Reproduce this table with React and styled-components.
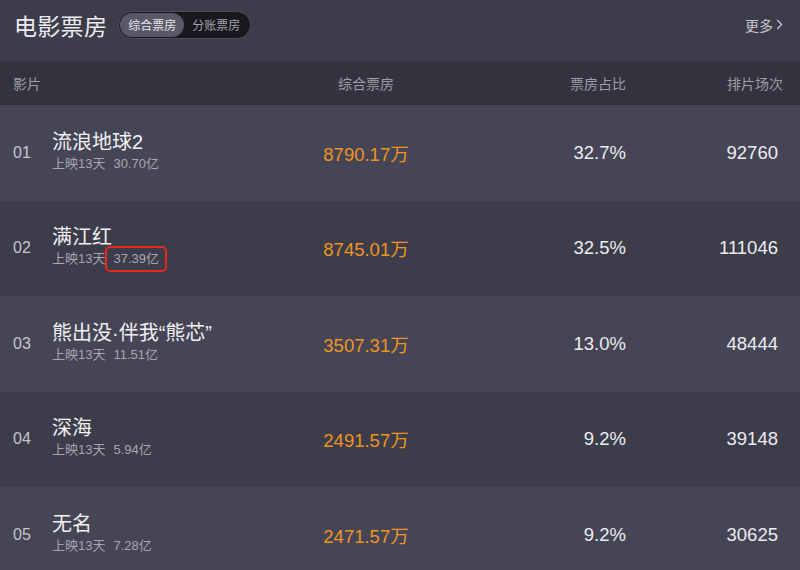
import React from 'react'
import styled, { createGlobalStyle } from 'styled-components'

const Global = createGlobalStyle`
  html, body {
    margin: 0;
    padding: 0;
    background: #464555;
  }
  body {
    font-family: "Liberation Sans", "Noto Sans CJK SC", sans-serif;
  }
`

const Page = styled.div`
  width: 800px;
  height: 570px;
  overflow: hidden;
  background: #3d3c4a;
`

const TopBar = styled.div`
  height: 61px;
  display: flex;
  align-items: center;
  padding: 0 17px 0 14px;
  gap: 11px;
`

const Title = styled.h1`
  margin: 0;
  font-size: 23px;
  font-weight: 400;
  color: #ececf0;
  letter-spacing: 0.3px;
  margin-top: -12px;
`

const Toggle = styled.div`
  display: flex;
  align-items: center;
  height: 28px;
  box-sizing: border-box;
  padding: 1px;
  border-radius: 14px;
  background: #18171d;
  border: 1px solid #4d4c5a;
  margin-top: -12px;
`

const ToggleItem = styled.span`
  height: 24px;
  display: flex;
  align-items: center;
  padding: 0 ${p => (p.$active ? '8px' : '9px')} 0 8px;
  border-radius: 12px;
  font-size: 12px;
  background: ${p => (p.$active ? '#5a5868' : 'transparent')};
  color: ${p => (p.$active ? '#e6e6ea' : '#a3a2aa')};
`

const More = styled.a`
  margin-left: auto;
  margin-top: -12px;
  display: flex;
  align-items: center;
  gap: 3px;
  font-size: 14px;
  color: #c6c5cc;
`

const Row = styled.div`
  display: grid;
  grid-template-columns: 39px 230px 168px 176px 1fr;
  align-items: center;
  padding: 0 ${p => (p.$head ? '17px' : '22px')} 0 13px;
  height: ${p => (p.$head ? '44px' : '95.5px')};
  background: ${p => p.$bg};
`

const HeadCell = styled.div`
  font-size: 14px;
  color: #9d9ca8;
  text-align: ${p => p.$align || 'left'};
  grid-column: ${p => p.$span || 'auto'};
`

const Rank = styled.div`
  font-size: 16px;
  color: #c5c5cc;
`

const Film = styled.div`
  display: flex;
  flex-direction: column;
  gap: 2px;
  margin-top: -4px;
`

const FilmName = styled.div`
  font-size: 20px;
  color: #f0f0f3;
  line-height: 24px;
`

const Meta = styled.div`
  font-size: 13px;
  color: #a7a6b0;
  line-height: 16px;
  display: flex;
  gap: 8px;
`

const Gross = styled.span`
  position: relative;
  &::after {
    content: '';
    display: ${p => (p.$marked ? 'block' : 'none')};
    position: absolute;
    inset: -5px -8px -5px -8px;
    border: 2.5px solid #e8291c;
    border-radius: 5px;
  }
`

const BoxOffice = styled.div`
  font-size: 18.5px;
  color: #ee9420;
  text-align: center;
`

const Num = styled.div`
  font-size: 18.5px;
  color: #ececf0;
  text-align: right;
`

const films = [
  { rank: '01', name: '流浪地球2', days: '上映13天', total: '30.70亿', box: '8790.17万', rate: '32.7%', shows: '92760' },
  { rank: '02', name: '满江红', days: '上映13天', total: '37.39亿', box: '8745.01万', rate: '32.5%', shows: '111046', marked: true },
  { rank: '03', name: '熊出没·伴我“熊芯”', days: '上映13天', total: '11.51亿', box: '3507.31万', rate: '13.0%', shows: '48444' },
  { rank: '04', name: '深海', days: '上映13天', total: '5.94亿', box: '2491.57万', rate: '9.2%', shows: '39148' },
  { rank: '05', name: '无名', days: '上映13天', total: '7.28亿', box: '2471.57万', rate: '9.2%', shows: '30625' },
]

export default function App() {
  return (
    <Page>
      <Global />
      <TopBar>
        <Title>电影票房</Title>
        <Toggle>
          <ToggleItem $active>综合票房</ToggleItem>
          <ToggleItem>分账票房</ToggleItem>
        </Toggle>
        <More>
          更多
          <svg width="7" height="11" viewBox="0 0 7 11" fill="none">
            <path d="M1.2 1 L5.6 5.5 L1.2 10" stroke="#c6c5cc" strokeWidth="1.3" />
          </svg>
        </More>
      </TopBar>

      <Row $head $bg="#33323e">
        <HeadCell $span="1 / 3">影片</HeadCell>
        <HeadCell $align="center">综合票房</HeadCell>
        <HeadCell $align="right">票房占比</HeadCell>
        <HeadCell $align="right">排片场次</HeadCell>
      </Row>

      {films.map((f, i) => (
        <Row key={f.rank} $bg={i % 2 === 0 ? '#464555' : '#3d3c4a'}>
          <Rank>{f.rank}</Rank>
          <Film>
            <FilmName>{f.name}</FilmName>
            <Meta>
              <span>{f.days}</span>
              <Gross $marked={f.marked}>{f.total}</Gross>
            </Meta>
          </Film>
          <BoxOffice>{f.box}</BoxOffice>
          <Num>{f.rate}</Num>
          <Num>{f.shows}</Num>
        </Row>
      ))}
    </Page>
  )
}
